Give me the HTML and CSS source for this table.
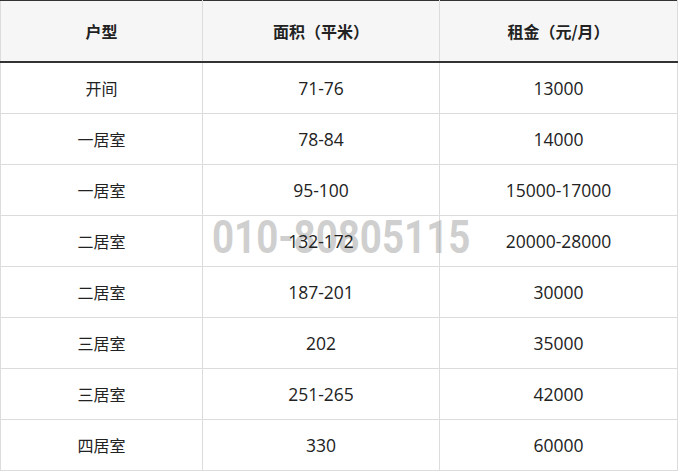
FILE: index.html
```html
<!DOCTYPE html>
<html lang="zh">
<head>
<meta charset="utf-8">
<link rel="stylesheet" href="styles.css">
</head>
<body>
<div class="wrap">
<table class="price">
<colgroup><col class="c1"><col class="c2"><col class="c3"></colgroup>
<thead>
<tr><th>户型</th><th>面积（平米）</th><th>租金（元/月）</th></tr>
</thead>
<tbody>
<tr><td>开间</td><td class="num">71-76</td><td class="num">13000</td></tr>
<tr><td>一居室</td><td class="num">78-84</td><td class="num">14000</td></tr>
<tr><td>一居室</td><td class="num">95-100</td><td class="num">15000-17000</td></tr>
<tr><td>二居室</td><td class="num">132-172</td><td class="num">20000-28000</td></tr>
<tr><td>二居室</td><td class="num">187-201</td><td class="num">30000</td></tr>
<tr><td>三居室</td><td class="num">202</td><td class="num">35000</td></tr>
<tr><td>三居室</td><td class="num">251-265</td><td class="num">42000</td></tr>
<tr><td>四居室</td><td class="num">330</td><td class="num">60000</td></tr>
</tbody>
</table>
<div class="watermark">010-80805115</div>
</div>
</body>
</html>
```
FILE: styles.css
```css
html, body { margin: 0; padding: 0; background: #fff; }
.wrap { position: relative; width: 677px; }
.price {
  border-collapse: collapse;
  width: 677px;
  table-layout: fixed;
  font-family: "Noto Sans CJK SC", "Noto Sans", sans-serif;
  font-size: 16px;
  color: #222;
}
.c1 { width: 202px; }
.c2 { width: 237px; }
.c3 { width: 238px; }
.price th, .price td {
  border: 1px solid #dcdcdc;
  text-align: center;
  padding: 0;
  position: relative;
  z-index: 1;
}
.price thead th {
  background: #f6f6f6;
  height: 60px;
  font-weight: 700;
  border-top: 1px solid #333;
  border-bottom: 2px solid #333;
}
.price tbody td { height: 50px; }
.price td.num {
  font-family: "Open Sans", "Noto Sans", sans-serif;
  font-size: 17.5px;
}
.watermark {
  position: absolute;
  left: 212px;
  top: 209px;
  font-family: "Roboto", sans-serif;
  font-weight: 700;
  font-size: 47px;
  color: rgba(160, 160, 160, 0.5);
  transform: scaleX(0.82);
  transform-origin: left top;
  z-index: 0;
  white-space: nowrap;
  line-height: 56px;
}
```
